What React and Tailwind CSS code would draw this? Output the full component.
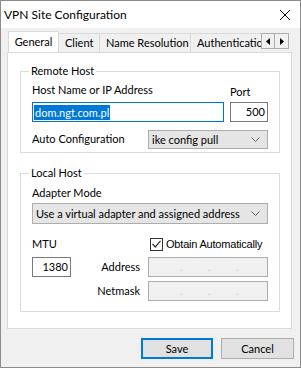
import React from 'react';

const Chevron = () => (
  <svg width="9" height="6" viewBox="0 0 9 6" className="shrink-0">
    <path d="M0.5 0.5 L4.5 4.5 L8.5 0.5" fill="none" stroke="#606060" strokeWidth="1" />
  </svg>
);

const Select = ({ value, className }) => (
  <div className={`flex items-center justify-between bg-[#e5e5e5] border border-[#adadad] pl-[3px] pr-[7px] whitespace-nowrap ${className}`}>
    <span className="leading-none">{value}</span>
    <Chevron />
  </div>
);

const IpField = () => (
  <div className="flex items-center w-[120px] h-[20px] bg-[#f0f0f0] border border-[#adadad] text-[#b4b4b4] text-[10px]">
    <span className="w-[31px]" />
    <span className="w-[28px]">.</span>
    <span className="w-[28px]">.</span>
    <span>.</span>
  </div>
);

const Tab = ({ label, active, width }) =>
  active ? (
    <div
      className="relative z-10 -mb-px h-[22px] bg-white border border-b-0 border-[#d9d9d9] flex items-center justify-center shrink-0"
      style={{ width }}
    >
      {label}
    </div>
  ) : (
    <div
      className="h-[19px] bg-[#f0f0f0] border border-b-0 border-l-0 border-[#d9d9d9] flex items-center pl-[6px] whitespace-nowrap shrink-0 overflow-hidden"
      style={{ width }}
    >
      {label}
    </div>
  );

const App = () => {
  return (
    <div className="w-[301px] h-[368px] flex flex-col bg-[#f0f0f0] border border-[#8c8c8c] text-[11px] text-black font-['Segoe_UI','Lato',sans-serif] overflow-hidden">
      {/* Title bar */}
      <div className="h-[27px] bg-white flex items-center justify-between pl-[3px] pr-[10px] shrink-0">
        <span className="text-[12px]">VPN Site Configuration</span>
        <svg width="10" height="10" viewBox="0 0 10 10">
          <path d="M0 0 L10 10 M10 0 L0 10" stroke="#000" strokeWidth="1" />
        </svg>
      </div>

      <div className="flex-1 flex flex-col px-[6px] pt-[3px]">
        {/* Tab strip */}
        <div className="flex items-end h-[21px] pl-[1px]">
          <div className="flex items-end w-[253px] overflow-hidden">
            <Tab label="General" active width={51} />
            <Tab label="Client" width={41} />
            <Tab label="Name Resolution" width={91} />
            <Tab label="Authentication" width={75} />
          </div>
          <div className="flex self-start mt-[2px]">
            <div className="w-[14px] h-[16px] bg-[#f0f0f0] border border-[#adadad] flex items-center justify-center">
              <svg width="4" height="7" viewBox="0 0 4 7"><path d="M4 0 L0 3.5 L4 7 Z" fill="#000" /></svg>
            </div>
            <div className="w-[14px] h-[16px] bg-[#f0f0f0] border border-l-0 border-[#adadad] flex items-center justify-center">
              <svg width="4" height="7" viewBox="0 0 4 7"><path d="M0 0 L4 3.5 L0 7 Z" fill="#000" /></svg>
            </div>
          </div>
        </div>

        {/* Tab panel */}
        <div className="w-[285px] bg-white border border-[#d9d9d9] pt-[10px] pb-[16px]">
          <fieldset className="ml-[12px] w-[260px] border border-[#dcdcdc] px-[11px] pb-[3px]">
            <legend className="ml-[-3px] px-[2px] leading-[16px]">Remote Host</legend>
            <div className="flex items-start mt-[3px] h-[16px] leading-[16px]">
              <span className="w-[198px]">Host Name or IP Address</span>
              <span className="mt-[2px]">Port</span>
            </div>
            <div className="flex mt-[4px] gap-[6px]">
              <div className="w-[192px] h-[20px] border border-[#0078d7] flex items-center pl-[1px]">
                <span className="bg-[#0078d7] text-white px-[1px] leading-[15px]">dom.ngt.com.pl</span>
              </div>
              <div className="w-[38px] h-[20px] border border-[#7a7a7a] flex items-center justify-end pr-[2px]">500</div>
            </div>
            <div className="flex items-center mt-[8px]">
              <span className="w-[116px]">Auto Configuration</span>
              <Select value="ike config pull" className="w-[120px] h-[19px]" />
            </div>
          </fieldset>

          <fieldset className="ml-[12px] mt-[12px] w-[260px] border border-[#dcdcdc] px-[11px] pb-[10px]">
            <legend className="ml-[-3px] px-[2px] leading-[16px]">Local Host</legend>
            <div className="mt-[4px] leading-[16px]">Adapter Mode</div>
            <Select value="Use a virtual adapter and assigned address" className="mt-[2px] w-[236px] h-[21px]" />
            <div className="flex items-center mt-[12px] h-[16px]">
              <span className="w-[118px]">MTU</span>
              <div className="w-[13px] h-[13px] border border-[#333] bg-white flex items-center justify-center">
                <svg width="9" height="8" viewBox="0 0 9 8">
                  <path d="M0.5 4 L3.3 7 L8.5 0.8" fill="none" stroke="#333" strokeWidth="1.2" />
                </svg>
              </div>
              <span className="ml-[3px] whitespace-nowrap font-['Liberation_Sans',sans-serif] tracking-[-0.2px]">Obtain Automatically</span>
            </div>
            <div className="flex items-center mt-[5px]">
              <div className="w-[39px] h-[20px] border border-[#7a7a7a] flex items-center justify-end pr-[2px]">1380</div>
              <span className="flex-1 text-right pr-[8px]">Address</span>
              <IpField />
            </div>
            <div className="flex items-center mt-[4px]">
              <span className="flex-1 text-right pr-[8px]">Netmask</span>
              <IpField />
            </div>
          </fieldset>
        </div>

        {/* Buttons */}
        <div className="flex justify-end gap-[8px] mt-[9px]">
          <button className="w-[72px] h-[21px] bg-[#e1e1e1] border-2 border-[#0078d7] leading-none">Save</button>
          <button className="w-[73px] h-[21px] bg-[#e1e1e1] border border-[#adadad] leading-none">Cancel</button>
        </div>
      </div>
    </div>
  );
};

export default App;
